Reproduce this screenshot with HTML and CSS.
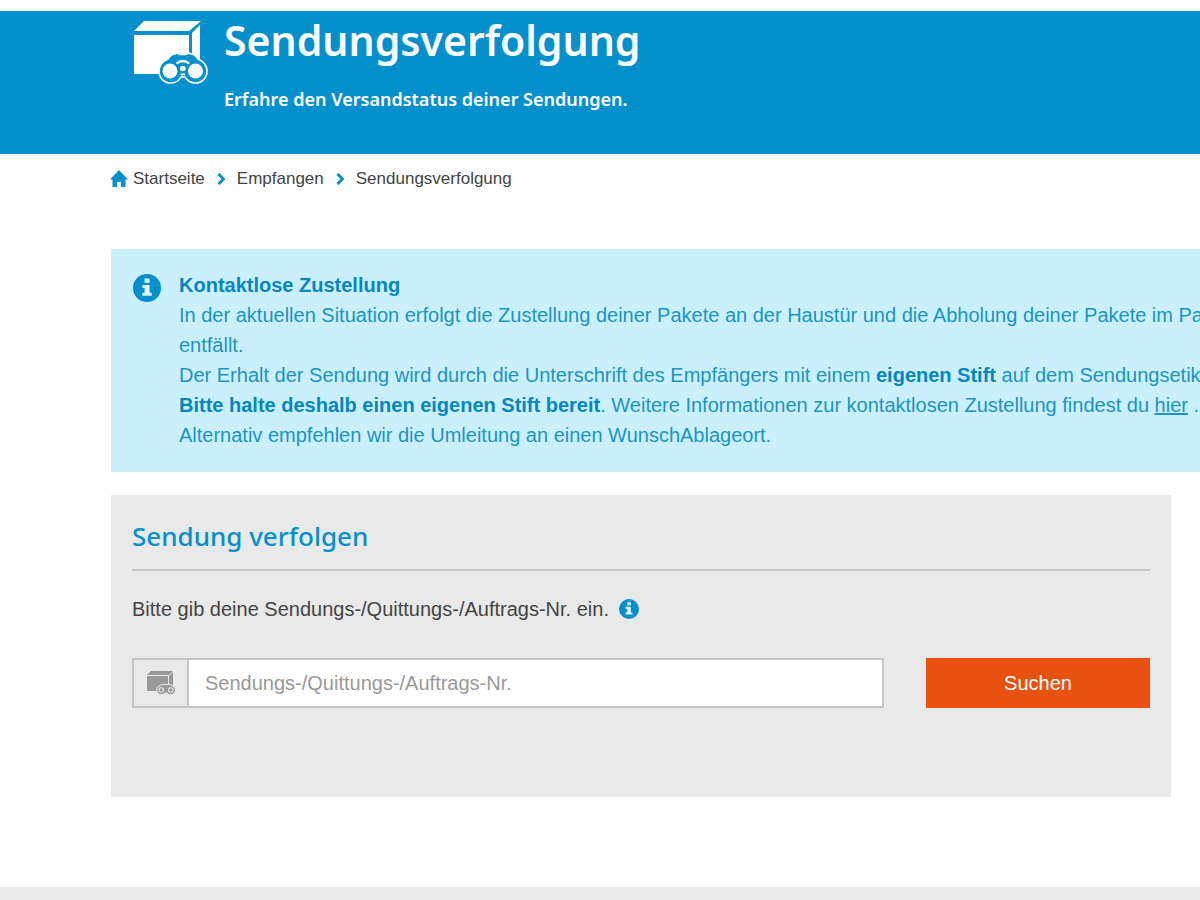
FILE: index.html
```html
<!DOCTYPE html>
<html lang="de">
<head>
    <meta charset="UTF-8">
    <meta name="viewport" content="width=device-width, initial-scale=1.0">
    <title>Sendungsverfolgung</title>
    <link rel="stylesheet" href="styles.css">
</head>
<body>

    <!-- shared icons -->
    <svg class="icon-defs" aria-hidden="true">
        <symbol id="icon-info" viewBox="0 0 28 28">
            <circle cx="14" cy="14" r="14" fill="#0490cc"/>
            <path class="info-mark" d="M11.6 4.500h5v4.300h-5zM9.400 11h7.200v7.800h2.200v2.900H9.200v-2.900h2.400v-4.900H9.400z"/>
        </symbol>
    </svg>

    <header class="page-header">
        <svg class="header-icon" viewBox="0 0 76 64" aria-hidden="true">
            <path fill="#fff" d="M11 0h57L56 10H1zM1 14h55v39H1zM59 12l8-8v42h-8z"/>
            <path fill="#0490cc" stroke="#fff" stroke-width="1.600" d="M35 38c2-3 4-5 7-5l2-1 3 1.500h6l3-1.500 2 1c3 0 5 2 7 5 5 2 9 6 9 12 0 7-5 12-11.500 12-5 0-8-2-10.500-6h-4c-2 4-6 6-10.500 6C31 62 26 57 26 50c0-6 4-10 9-12z"/>
            <g fill="#fff">
                <circle cx="37" cy="50" r="7.500"/>
                <circle cx="62.500" cy="50" r="7.500"/>
                <circle cx="49.800" cy="47.500" r="2.800"/>
                <path d="M47.500 52.500h4.600v1.800h-4.600z"/>
            </g>
            <path d="M43.500 42.500q6.300-5 12.600 0" fill="none" stroke="#fff" stroke-width="2.400"/>
        </svg>
        <div>
            <h1>Sendungsverfolgung</h1>
            <p>Erfahre den Versandstatus deiner Sendungen.</p>
        </div>
    </header>

    <nav class="breadcrumb" aria-label="Breadcrumb">
        <a href="#">
            <svg class="home-icon" viewBox="0 0 18 18" aria-hidden="true"><path fill="#0490cc" d="M9 0l9 9.500h-2.500V17H11v-5H7v5H2.500V9.500H0z"/></svg>
            Startseite
        </a>
        <svg class="chevron" viewBox="0 0 8 12" aria-hidden="true"><path d="M1.500 1l5 5-5 5"/></svg>
        <a href="#">Empfangen</a>
        <svg class="chevron" viewBox="0 0 8 12" aria-hidden="true"><path d="M1.500 1l5 5-5 5"/></svg>
        <span>Sendungsverfolgung</span>
    </nav>

    <main>
        <section class="notice">
            <svg class="notice-icon" aria-hidden="true"><use href="#icon-info"/></svg>
            <p>
                <strong>Kontaktlose Zustellung</strong><br>
                In der aktuellen Situation erfolgt die Zustellung deiner Pakete an der Haustür und die Abholung deiner Pakete im Pak<br>
                entfällt.<br>
                Der Erhalt der Sendung wird durch die Unterschrift des Empfängers mit einem <strong>eigenen Stift</strong> auf dem Sendungsetike<br>
                <strong>Bitte halte deshalb einen eigenen Stift bereit</strong>. Weitere Informationen zur kontaktlosen Zustellung findest du <a href="#">hier</a> .<br>
                Alternativ empfehlen wir die Umleitung an einen WunschAblageort.
            </p>
        </section>

        <section class="tracking">
            <h2>Sendung verfolgen</h2>
            <form>
                <label for="tracking-number">
                    Bitte gib deine Sendungs-/Quittungs-/Auftrags-Nr. ein.
                    <svg class="label-icon" aria-hidden="true"><use href="#icon-info"/></svg>
                </label>
                <div class="form-row">
                    <div class="input-group">
                        <span class="input-icon">
                            <svg viewBox="0 0 30 26" aria-hidden="true">
                                <path fill="#999" d="M5 1h22l-4 4H1zM1 6h21v15H1zM23 6l4-4v15h-4z"/>
                                <path fill="#999" stroke="#e9e9e9" d="M14 15.500q2-2 4-1h4q2-1 4 1 3.500 1.500 3.500 4.500a4.800 4.800 0 0 1-8.500 3h-2a4.800 4.800 0 0 1-8.500-3q0-3 3.500-4.500z"/>
                                <g fill="#e9e9e9">
                                    <circle cx="15.200" cy="20" r="2.800"/>
                                    <circle cx="24.800" cy="20" r="2.800"/>
                                </g>
                                <g fill="#999">
                                    <circle cx="15.200" cy="20" r="1.800"/>
                                    <circle cx="24.800" cy="20" r="1.800"/>
                                </g>
                            </svg>
                        </span>
                        <input type="text" id="tracking-number" placeholder="Sendungs-/Quittungs-/Auftrags-Nr.">
                    </div>
                    <button type="button">Suchen</button>
                </div>
            </form>
        </section>
    </main>

    <footer class="page-footer"></footer>

</body>
</html>
```

FILE: styles.css
```css
:root {
    --brand-blue: #0490cc;
    --notice-bg: #cbf0fd;
    --panel-bg: #e9e9e9;
    --border-grey: #c6c6c6;
    --text-color: #444;
    --orange: #e8510f;
}

* {
    box-sizing: border-box;
}

body {
    margin: 0;
    min-height: 100vh;
    display: flex;
    flex-direction: column;
    font-family: "Liberation Sans", Arial, sans-serif;
    font-size: 20px;
    line-height: 30px;
    color: var(--text-color);
    background-color: #fefefe;
    overflow-x: hidden;
}

h1, h2, p {
    margin: 0;
}

.icon-defs {
    position: absolute;
    width: 0;
    height: 0;
}

.info-mark {
    fill: #e3f6fd;
}

/* Header */
.page-header {
    display: flex;
    gap: 15px;
    height: 143px;
    margin-top: 11px;
    padding-left: 133px;
    background-color: var(--brand-blue);
    color: #fff;
    font-family: "Noto Sans", sans-serif;
}

.header-icon {
    width: 76px;
    height: 64px;
    margin-top: 10px;
}

.page-header h1 {
    font-size: 41px;
    line-height: 58px;
    font-weight: 600;
}

.page-header p {
    margin-top: 15px;
    font-size: 18px;
    font-weight: 600;
}

/* Breadcrumb */
.breadcrumb {
    display: flex;
    align-items: center;
    gap: 12px;
    height: 50px;
    padding-left: 110px;
    font-size: 17px;
}

.breadcrumb a {
    display: flex;
    align-items: center;
    gap: 5px;
    color: inherit;
    text-decoration: none;
}

.home-icon {
    width: 18px;
    height: 18px;
}

.chevron {
    width: 8px;
    height: 12px;
    fill: none;
    stroke: var(--brand-blue);
    stroke-width: 3;
}

/* Content */
main {
    flex: 1;
    padding-left: 111px;
    padding-top: 45px;
}

.notice {
    display: flex;
    gap: 18px;
    padding: 21px 0 22px 22px;
    background-color: var(--notice-bg);
    color: #1a94c8;
    white-space: nowrap;
    overflow: hidden;
}

.notice strong {
    color: #0486c2;
}

.notice a {
    color: inherit;
}

.notice-icon {
    flex: none;
    width: 28px;
    height: 28px;
    margin-top: 4px;
}

.tracking {
    margin: 23px 29px 90px 0;
    padding: 21px 21px 89px;
    background-color: var(--panel-bg);
}

.tracking h2 {
    padding-bottom: 13px;
    border-bottom: 2px solid var(--border-grey);
    color: var(--brand-blue);
    font-family: "Noto Sans", sans-serif;
    font-size: 26px;
    line-height: 40px;
    font-weight: 500;
}

.tracking label {
    display: flex;
    align-items: center;
    gap: 10px;
    margin: 23px 0 34px;
}

.label-icon {
    width: 20px;
    height: 20px;
}

.form-row {
    display: flex;
    gap: 42px;
}

.input-group {
    flex: 1;
    display: flex;
    height: 50px;
    border: 2px solid var(--border-grey);
    background-color: #fff;
}

.input-icon {
    display: flex;
    align-items: center;
    justify-content: center;
    width: 55px;
    border-right: 2px solid var(--border-grey);
    background-color: var(--panel-bg);
}

.input-icon svg {
    width: 30px;
    height: 26px;
}

.input-group input {
    flex: 1;
    min-width: 0;
    padding: 0 16px;
    border: none;
    font: inherit;
    background: none;
}

.input-group input::placeholder {
    color: #999;
}

.tracking button {
    width: 224px;
    border: none;
    background-color: var(--orange);
    color: #fff;
    font: inherit;
    cursor: pointer;
}

.page-footer {
    height: 13px;
    background-color: var(--panel-bg);
}
```
